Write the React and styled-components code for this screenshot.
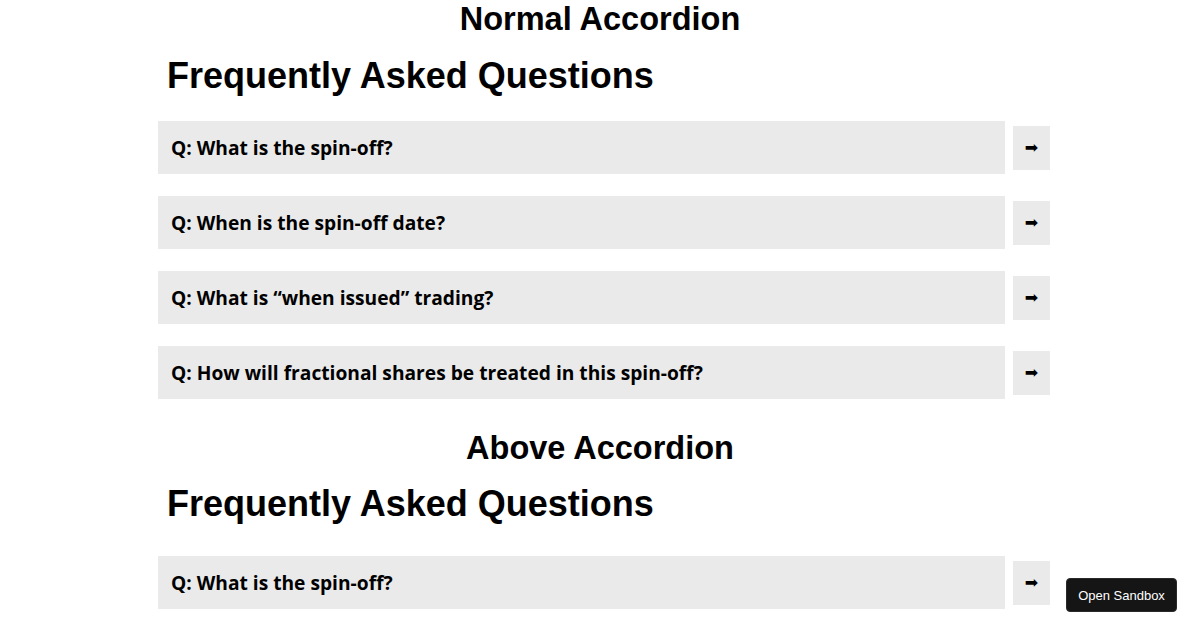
import styled, { createGlobalStyle } from "styled-components";

const GlobalStyle = createGlobalStyle`
  body {
    margin: 0;
    background: #fff;
    color: #000;
    font-family: "Liberation Sans", Arial, sans-serif;
  }
`;

const Page = styled.div`
  width: 900px;
  margin: 0 auto;
`;

const SectionTitle = styled.h1`
  margin: ${props => props.$top}px 0 0;
  font-size: 32.5px;
  font-weight: 700;
  text-align: center;
  line-height: 37px;
`;

const Faq = styled.section`
  padding-left: 8px;
`;

const FaqTitle = styled.h2`
  margin: ${props => props.$top}px 0 ${props => props.$bottom}px 9px;
  font-size: 36px;
  font-weight: 700;
  line-height: 41px;
`;

const List = styled.div`
  display: flex;
  flex-direction: column;
  gap: 22px;
`;

const Row = styled.div`
  display: flex;
  align-items: center;
  gap: 8px;
`;

const Question = styled.div`
  flex: 1;
  height: 53px;
  display: flex;
  align-items: center;
  padding: 0 13px;
  background: #eaeaea;
  font-family: "Open Sans", "Noto Sans", sans-serif;
  font-size: 19.2px;
  font-weight: 700;
`;

const ToggleButton = styled.button`
  width: 37px;
  height: 44px;
  padding: 0;
  border: none;
  background: #eaeaea;
  color: #000;
  font-family: "DejaVu Sans", sans-serif;
  font-size: 16px;
  line-height: 1;
  cursor: pointer;
`;

const SandboxButton = styled.a`
  position: fixed;
  right: 23px;
  bottom: 18px;
  display: flex;
  align-items: center;
  justify-content: center;
  width: 111px;
  height: 34px;
  box-sizing: border-box;
  border-radius: 4px;
  border: 1px solid #2a2a2a;
  background: #151515;
  color: #fff;
  font-family: "Liberation Sans", Arial, sans-serif;
  font-size: 13px;
  text-decoration: none;
`;

const questions = [
  "Q: What is the spin-off?",
  "Q: When is the spin-off date?",
  "Q: What is \u201cwhen issued\u201d trading?",
  "Q: How will fractional shares be treated in this spin-off?",
];

function FaqRow({ text }) {
  return (
    <Row>
      <Question>{text}</Question>
      <ToggleButton>{"\u27A1"}</ToggleButton>
    </Row>
  );
}

export default function App() {
  return (
    <>
      <GlobalStyle />
      <Page>
        <SectionTitle $top={1}>Normal Accordion</SectionTitle>
        <Faq>
          <FaqTitle $top={17} $bottom={25}>Frequently Asked Questions</FaqTitle>
          <List>
            {questions.map(q => <FaqRow key={q} text={q} />)}
          </List>
        </Faq>
        <SectionTitle $top={31}>Above Accordion</SectionTitle>
        <Faq>
          <FaqTitle $top={16} $bottom={32}>Frequently Asked Questions</FaqTitle>
          <List>
            {questions.map(q => <FaqRow key={q} text={q} />)}
          </List>
        </Faq>
      </Page>
      <SandboxButton href="#">Open Sandbox</SandboxButton>
    </>
  );
}
